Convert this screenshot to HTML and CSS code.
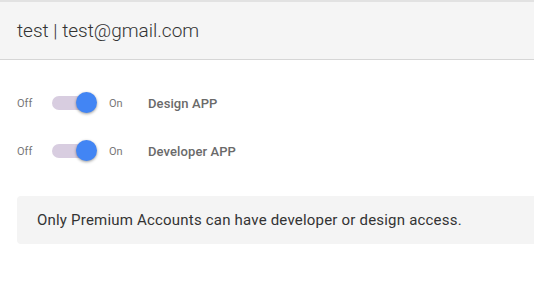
FILE: index.html
```html
<!DOCTYPE html>
<html>
<head>
<meta charset="utf-8">
<link rel="stylesheet" href="styles.css">
</head>
<body>
<header class="header">
  <span class="user">test | test@gmail.com</span>
</header>
<main class="content">
  <div class="rows">
    <div class="row">
      <span class="lbl">Off</span>
      <span class="switch"><span class="track"></span><span class="thumb"></span></span>
      <span class="lbl">On</span>
      <span class="app">Design APP</span>
    </div>
    <div class="row">
      <span class="lbl">Off</span>
      <span class="switch"><span class="track"></span><span class="thumb"></span></span>
      <span class="lbl">On</span>
      <span class="app">Developer APP</span>
    </div>
  </div>
  <div class="notice">Only Premium Accounts can have developer or design access.</div>
</main>
</body>
</html>
```
FILE: styles.css
```css
html, body { margin: 0; padding: 0; background: #fff; }
body { font-family: Roboto, "Liberation Sans", sans-serif; overflow: hidden; width: 534px; height: 301px; }
.header {
  height: 57px;
  border-top: 2px solid #e2e2e2;
  border-bottom: 1px solid #d6d6d6;
  background: #f5f5f5;
  display: flex;
  align-items: center;
  padding-left: 17px;
}
.user { font-size: 19px; color: #333; font-weight: 300; }
.content { padding: 0 0 0 17px; }
.rows { padding-top: 32px; display: flex; flex-direction: column; gap: 26px; }
.row { display: flex; align-items: center; height: 22px; }
.lbl { font-size: 11px; color: #777; width: 35px; }
.switch { position: relative; width: 46px; height: 22px; margin-right: 11px; }
.track { position: absolute; left: 0; top: 4px; width: 38px; height: 14px; border-radius: 7px; background: #d8cde0; }
.thumb { position: absolute; left: 24px; top: 0; width: 21px; height: 21px; border-radius: 50%; background: #4285f4; box-shadow: 0 1px 3px rgba(0,0,0,0.4); }
.row .lbl:nth-child(3) { width: 39px; }
.app { font-size: 13px; color: #6a6a6a; font-weight: 500; letter-spacing: 0.1px; }
.notice {
  margin-top: 34px;
  height: 48px;
  width: 540px;
  background: #f4f4f4;
  border-radius: 4px 0 0 4px;
  display: flex;
  align-items: center;
  padding-left: 20px;
  font-size: 15px;
  letter-spacing: 0.2px;
  color: #333;
  box-sizing: border-box;
}
```
